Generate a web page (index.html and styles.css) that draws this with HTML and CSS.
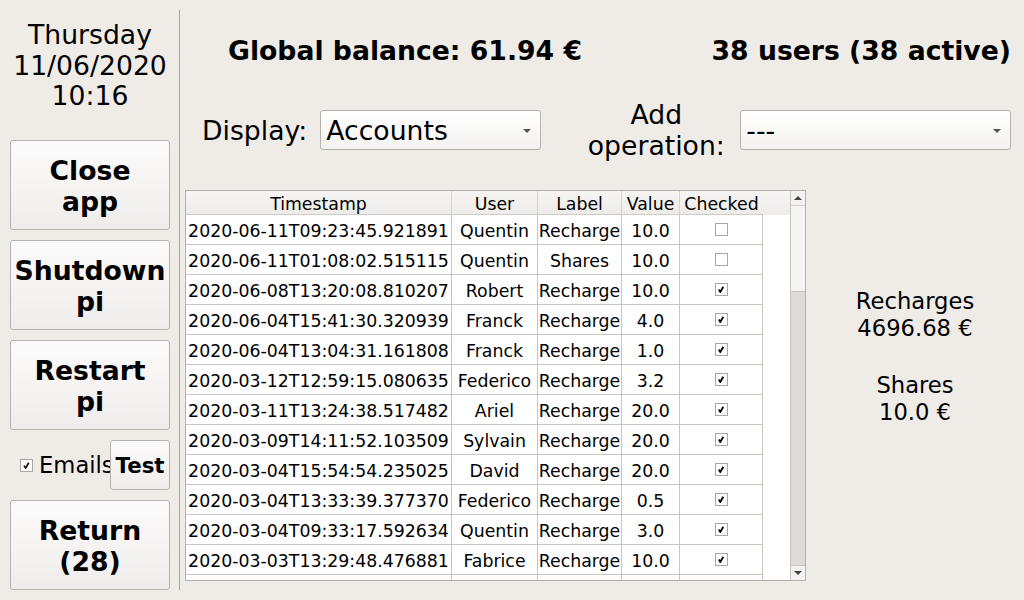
FILE: index.html
```html
<!DOCTYPE html>
<html lang="en">
<head>
<meta charset="utf-8">
<title>Accounts</title>
<link rel="stylesheet" href="styles.css">
</head>
<body>
<div class="app">
  <aside class="side">
    <div class="clock">Thursday<br>11/06/2020<br>10:16</div>
    <div class="actions">
      <button class="big-btn">Close<br>app</button>
      <button class="big-btn">Shutdown<br>pi</button>
      <button class="big-btn">Restart<br>pi</button>
      <div class="email-row">
        <label class="email-check">
          <svg class="cb" width="13" height="13" viewBox="0 0 13 13"><rect x="0.5" y="0.5" width="12" height="12" fill="#fff" stroke="#a9a6a2"/><path d="M4 6.6 L5.6 9 L8.8 3.8" fill="none" stroke="#111" stroke-width="1.7"/></svg>
          <span>Emails</span>
        </label>
        <button class="test-btn">Test</button>
      </div>
      <button class="big-btn">Return<br>(28)</button>
    </div>
  </aside>
  <div class="divider"></div>
  <main class="main">
    <header class="header">
      <div class="title">Global balance: 61.94 €</div>
      <div class="title">38 users (38 active)</div>
    </header>
    <div class="controls">
      <span class="ctl-label">Display:</span>
      <div class="combo combo-display"><span>Accounts</span><i class="arrow"></i></div>
      <span class="ctl-label add-label">Add<br>operation:</span>
      <div class="combo combo-op"><span>---</span><i class="arrow"></i></div>
    </div>
    <div class="content">
      <div class="grid-box">
        <div class="viewport">
          <div class="row head">
            <div class="cell">Timestamp</div>
            <div class="cell">User</div>
            <div class="cell">Label</div>
            <div class="cell">Value</div>
            <div class="cell">Checked</div>
            <div class="cell filler"></div>
          </div>
          <div class="row"><div class="cell">2020-06-11T09:23:45.921891</div><div class="cell">Quentin</div><div class="cell">Recharge</div><div class="cell">10.0</div><div class="cell"><span class="box"></span></div></div>
          <div class="row"><div class="cell">2020-06-11T01:08:02.515115</div><div class="cell">Quentin</div><div class="cell">Shares</div><div class="cell">10.0</div><div class="cell"><span class="box"></span></div></div>
          <div class="row"><div class="cell">2020-06-08T13:20:08.810207</div><div class="cell">Robert</div><div class="cell">Recharge</div><div class="cell">10.0</div><div class="cell"><span class="box on"></span></div></div>
          <div class="row"><div class="cell">2020-06-04T15:41:30.320939</div><div class="cell">Franck</div><div class="cell">Recharge</div><div class="cell">4.0</div><div class="cell"><span class="box on"></span></div></div>
          <div class="row"><div class="cell">2020-06-04T13:04:31.161808</div><div class="cell">Franck</div><div class="cell">Recharge</div><div class="cell">1.0</div><div class="cell"><span class="box on"></span></div></div>
          <div class="row"><div class="cell">2020-03-12T12:59:15.080635</div><div class="cell">Federico</div><div class="cell">Recharge</div><div class="cell">3.2</div><div class="cell"><span class="box on"></span></div></div>
          <div class="row"><div class="cell">2020-03-11T13:24:38.517482</div><div class="cell">Ariel</div><div class="cell">Recharge</div><div class="cell">20.0</div><div class="cell"><span class="box on"></span></div></div>
          <div class="row"><div class="cell">2020-03-09T14:11:52.103509</div><div class="cell">Sylvain</div><div class="cell">Recharge</div><div class="cell">20.0</div><div class="cell"><span class="box on"></span></div></div>
          <div class="row"><div class="cell">2020-03-04T15:54:54.235025</div><div class="cell">David</div><div class="cell">Recharge</div><div class="cell">20.0</div><div class="cell"><span class="box on"></span></div></div>
          <div class="row"><div class="cell">2020-03-04T13:33:39.377370</div><div class="cell">Federico</div><div class="cell">Recharge</div><div class="cell">0.5</div><div class="cell"><span class="box on"></span></div></div>
          <div class="row"><div class="cell">2020-03-04T09:33:17.592634</div><div class="cell">Quentin</div><div class="cell">Recharge</div><div class="cell">3.0</div><div class="cell"><span class="box on"></span></div></div>
          <div class="row"><div class="cell">2020-03-03T13:29:48.476881</div><div class="cell">Fabrice</div><div class="cell">Recharge</div><div class="cell">10.0</div><div class="cell"><span class="box on"></span></div></div>
          <div class="row"><div class="cell"></div><div class="cell"></div><div class="cell"></div><div class="cell"></div><div class="cell"></div></div>
        </div>
        <div class="scrollbar">
          <div class="sb-btn"><i class="tri up"></i></div>
          <div class="sb-thumb"></div>
          <div class="sb-track"></div>
          <div class="sb-btn down"><i class="tri dn"></i></div>
        </div>
      </div>
      <div class="stats">
        <div class="stat">Recharges<br>4696.68 €</div>
        <div class="stat">Shares<br>10.0 €</div>
      </div>
    </div>
  </main>
</div>
</body>
</html>
```

FILE: styles.css
```css
* { box-sizing: border-box; }
html, body { margin: 0; padding: 0; }
body {
  width: 1024px;
  height: 600px;
  overflow: hidden;
  background: #efece8;
  color: #000;
  font-family: "DejaVu Sans", sans-serif;
}
.app {
  display: grid;
  grid-template-columns: 179px 1px 1fr;
  height: 600px;
}
.side {
  padding: 20px 9px 0 10px;
  display: flex;
  flex-direction: column;
}
.clock {
  font-size: 26.67px;
  line-height: 30.5px;
  text-align: center;
  height: 120px;
}
.actions {
  display: flex;
  flex-direction: column;
  gap: 10px;
}
.big-btn {
  height: 90px;
  width: 160px;
  border: 1px solid #b6b2ae;
  border-radius: 3px;
  background: linear-gradient(#fcfbfb, #efedeb);
  font-family: "DejaVu Sans", sans-serif;
  font-weight: bold;
  font-size: 26.67px;
  line-height: 31px;
  color: #000;
  padding: 2px 0 0;
  text-align: center;
}
.email-row {
  height: 50px;
  display: flex;
  align-items: center;
}
.email-check {
  width: 100px;
  flex: none;
  display: flex;
  align-items: center;
  white-space: nowrap;
  padding-left: 10px;
  font-size: 22.67px;
}
.email-check .cb { flex: none; margin-right: 6px; }
.test-btn {
  flex: none;
  width: 60px;
  height: 50px;
  border: 1px solid #b6b2ae;
  border-radius: 3px;
  background: linear-gradient(#fcfbfb, #efedeb);
  font-family: "DejaVu Sans", sans-serif;
  font-weight: bold;
  font-size: 21.33px;
  color: #000;
  padding: 0;
}
.divider {
  margin: 10px 0;
  background: #aaa6a2;
}
.main {
  display: flex;
  flex-direction: column;
}
.header {
  display: flex;
  justify-content: space-between;
  padding: 35px 13px 0 48px;
  font-weight: bold;
  font-size: 26.67px;
  line-height: 31px;
}
.controls {
  display: flex;
  align-items: center;
  height: 62px;
  margin-top: 33px;
  padding-left: 22px;
  font-size: 26.67px;
  line-height: 31px;
}
.ctl-label { white-space: nowrap; }
.combo {
  height: 40px;
  border: 1px solid #b5b1ad;
  border-radius: 3px;
  background: linear-gradient(#ffffff, #f3f2f0);
  display: flex;
  align-items: center;
  justify-content: space-between;
  padding: 0 9px 0 5px;
  font-size: 26.67px;
}
.combo-display { width: 221px; margin-left: 13px; }
.add-label { text-align: center; width: 140px; margin-left: 45px; }
.combo-op { width: 271px; margin-left: 14px; }
.arrow {
  width: 0; height: 0;
  border-left: 4px solid transparent;
  border-right: 4px solid transparent;
  border-top: 4px solid #555;
  margin-top: 2px;
}
.content {
  display: flex;
  margin-top: 29px;
}
.grid-box {
  margin-left: 5px;
  width: 621px;
  height: 391px;
  border: 1px solid #b3afab;
  display: flex;
  background: #fff;
}
.viewport {
  flex: 1;
  overflow: hidden;
  font-size: 17.33px;
}
.row {
  display: grid;
  grid-template-columns: 266px 86px 84px 58px 83px;
  height: 30px;
}
.row.head {
  grid-template-columns: 266px 86px 84px 58px 83px 1fr;
  height: 24px;
  background: linear-gradient(#f6f5f3, #eeece9);
}
.cell {
  border-right: 1px solid #c9c6c2;
  border-bottom: 1px solid #c9c6c2;
  display: flex;
  align-items: center;
  justify-content: center;
  white-space: nowrap;
  overflow: hidden;
  padding-top: 2px;
}
.head .cell { border-right-color: #d6d3cf; border-bottom-color: #cfccc8; }
.head .cell:nth-child(5) { border-right: none; }
.head .filler { border: none; }
.box {
  width: 13px; height: 13px;
  border: 1px solid #aaa7a3;
  background: #fff;
  position: relative;
  margin-top: -2px;
}
.box.on::after {
  content: "";
  position: absolute;
  left: 2.5px; top: 1.5px;
  width: 6px; height: 7px;
  background: url("data:image/svg+xml;utf8,<svg xmlns='http://www.w3.org/2000/svg' width='6' height='7' viewBox='0 0 6 7'><path d='M0.8 3.6 L2.3 6 L5.3 0.8' fill='none' stroke='%23000' stroke-width='1.8'/></svg>") no-repeat;
}
.scrollbar {
  width: 15px;
  border-left: 1px solid #c6c3bf;
  display: flex;
  flex-direction: column;
  background: #f3f2f0;
}
.sb-btn {
  height: 15px;
  display: flex;
  align-items: center;
  justify-content: center;
  border-bottom: 1px solid #d3d0cc;
  background: #f3f2f0;
}
.sb-btn.down { border-bottom: none; border-top: 1px solid #c9c6c2; }
.sb-thumb {
  height: 86px;
  border-bottom: 1px solid #c9c6c2;
  background: #f5f4f2;
}
.sb-track { flex: 1; background: #dedbd8; }
.tri { width: 0; height: 0; border-left: 4px solid transparent; border-right: 4px solid transparent; }
.tri.up { border-bottom: 4px solid #444; }
.tri.dn { border-top: 4px solid #444; }
.stats {
  flex: 1;
  padding-top: 98px;
  text-align: center;
  font-size: 22.67px;
  line-height: 27px;
  display: flex;
  flex-direction: column;
  gap: 30px;
}
```
